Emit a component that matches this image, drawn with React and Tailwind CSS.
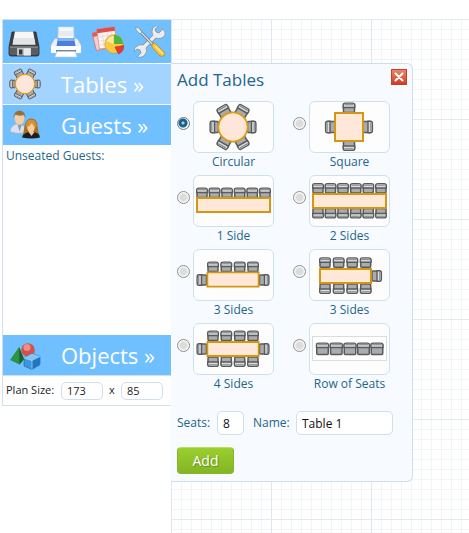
import React from "react";

const TOP = 0;
const RIGHT = 90;
const BOTTOM = 180;
const LEFT = 270;

function Chair({ x, y, turn = 0, w = 12, h = 10 }) {
  return (
    <g transform={`translate(${x} ${y}) rotate(${turn})`}>
      <rect x={-w / 2 + 1} y={-h / 2 + 2} width={w - 2} height={h - 2} rx="1" fill="#a9abae" stroke="#585b5e" strokeWidth="1.5" />
      <path
        d={`M${-w / 2 + 0.7} ${-h / 2 + 5} V${-h / 2 + 2.5} Q${-w / 2 + 0.7} ${-h / 2 + 0.6} ${-w / 2 + 3} ${-h / 2 + 0.6} H${w / 2 - 3} Q${w / 2 - 0.7} ${-h / 2 + 0.6} ${w / 2 - 0.7} ${-h / 2 + 2.5} V${-h / 2 + 5} Z`}
        fill="#dcdddf"
        stroke="#585b5e"
        strokeWidth="1.4"
      />
      <path d={`M${-w / 2 + 2} ${-h / 2 + 2.2} H${w / 2 - 2}`} stroke="#8b8e91" strokeWidth="1.2" />
    </g>
  );
}

function Top({ x, y, w, h }) {
  return (
    <g>
      <rect x={x + 1} y={y + 1} width={w - 2} height={h - 2} fill="#ffe8da" stroke="#d4951c" strokeWidth="2" />
      <rect x={x + 2.4} y={y + 2.4} width={w - 4.8} height={h - 4.8} fill="none" stroke="#fff0b8" strokeWidth="0.8" />
    </g>
  );
}

function RoundTable() {
  return (
    <g>
      <Chair x={30.8} y={10} turn={-30} w={13} h={11} />
      <Chair x={49.2} y={10} turn={30} w={13} h={11} />
      <Chair x={59} y={26} turn={RIGHT} w={13} h={9} />
      <Chair x={49.2} y={42} turn={150} w={13} h={11} />
      <Chair x={30.8} y={42} turn={210} w={13} h={11} />
      <Chair x={21} y={26} turn={LEFT} w={13} h={9} />
      <circle cx="40" cy="26" r="14.5" fill="#ffe6da" stroke="#d99a20" strokeWidth="1.8" />
      <circle cx="40" cy="26" r="13.2" fill="none" stroke="#ffe9b0" strokeWidth="0.8" />
    </g>
  );
}

const SIX = [9, 21.5, 34, 46.7, 59.3, 72];
const FOUR = [20, 33.3, 46.7, 60];
const FOUR_LEFT = [16, 29.7, 43.3, 56.7];

const row = (xs, y, turn) => xs.map((x) => <Chair key={`${x}-${y}`} x={x} y={y} turn={turn} />);

const TABLES = [
  { id: "circular", label: "Circular", art: <RoundTable /> },
  {
    id: "square",
    label: "Square",
    art: (
      <g>
        <Chair x={40} y={6.5} w={13} turn={TOP} />
        <Chair x={40} y={45} w={13} turn={BOTTOM} />
        <Chair x={21} y={26} w={13} turn={LEFT} />
        <Chair x={59} y={26} w={13} turn={RIGHT} />
        <Top x={25} y={11} w={30} h={30} />
      </g>
    ),
  },
  {
    id: "one",
    label: "1 Side",
    art: (
      <g>
        {row(SIX, 17.5, TOP)}
        <Top x={3} y={22} w={75} h={16} />
      </g>
    ),
  },
  {
    id: "two",
    label: "2 Sides",
    art: (
      <g>
        {row(SIX, 13, TOP)}
        {row(SIX, 38.5, BOTTOM)}
        <Top x={3} y={18} w={75} h={16} />
      </g>
    ),
  },
  {
    id: "three-ends",
    label: "3 Sides",
    art: (
      <g>
        {row(FOUR, 17.5, TOP)}
        <Chair x={8.5} y={31} turn={LEFT} />
        <Chair x={71.5} y={31} turn={RIGHT} />
        <Top x={13.5} y={22.5} w={53} h={16} />
      </g>
    ),
  },
  {
    id: "three-long",
    label: "3 Sides",
    art: (
      <g>
        {row(FOUR_LEFT, 13.3, TOP)}
        {row(FOUR_LEFT, 40, BOTTOM)}
        <Chair x={68} y={27} turn={RIGHT} />
        <Top x={10} y={19} w={53} h={16} />
      </g>
    ),
  },
  {
    id: "four",
    label: "4 Sides",
    art: (
      <g>
        {row(FOUR, 12.5, TOP)}
        {row(FOUR, 39, BOTTOM)}
        <Chair x={8.5} y={26} turn={LEFT} />
        <Chair x={71.5} y={26} turn={RIGHT} />
        <Top x={13.5} y={18} w={53} h={16} />
      </g>
    ),
  },
  {
    id: "row",
    label: "Row of Seats",
    art: (
      <g>
        <rect x="3.5" y="13.5" width="74" height="24" fill="#fff" stroke="#bbb" strokeDasharray="1 1" />
        {[13.5, 27.3, 41, 54.5, 68].map((x) => (
          <Chair key={x} x={x} y={25.5} w={13.5} h={12} />
        ))}
      </g>
    ),
  },
];

function SaveIcon() {
  return (
    <svg viewBox="0 0 32 32" className="size-8">
      <path d="M4 6h24l3 15v7q0 2-2 2H3q-2 0-2-2v-7z" fill="#3c4046" stroke="#2b2e33" strokeWidth=".8" />
      <path d="M1.500 21h29v6q0 2-2 2h-25q-2 0-2-2z" fill="#5a5e63" />
      <path d="M7 5.500h18l2.500 13h-23z" fill="#f8f8f8" />
      <path d="M6 12h20l1.300 6.500H4.700z" fill="#e2e4e6" />
      <path d="M2 21h28" stroke="#a9adb1" strokeWidth=".9" />
      <path d="M9 22h14v7.500H9z" fill="#c2c5c8" />
      <path d="M11 23.500h3.500v5H11z" fill="#34373c" />
      <path d="M16 22.500h6.500v7H16z" fill="#e9eaeb" />
    </svg>
  );
}

function PrintIcon() {
  return (
    <svg viewBox="0 0 32 32" className="size-8">
      <path d="M8.500 1h15l.5 13H8z" fill="#f5f6f8" stroke="#d5dadf" strokeWidth=".6" />
      <path d="M9 5h14v5H9z" fill="#e7eaee" />
      <path d="M4 14q0-1.500 2-1.500h2V16h16v-3.500h2q2 0 2 1.500l3 5v7q0 1-1 1H2q-1 0-1-1v-7z" fill="#edf1f6" stroke="#b6c5d4" strokeWidth=".6" />
      <path d="M8 12h16l1.500 8h-19z" fill="#4b7fda" />
      <path d="M8.500 12h15l.5 3H8z" fill="#86b3f3" />
      <path d="M1 20h30v6q0 1-1 1H2q-1 0-1-1z" fill="#fbfcfe" />
      <path d="M6 24h20v2H6z" fill="#71889f" />
      <path d="M7 25.500h18l2 5.500H5z" fill="#fff" stroke="#c3ccd5" strokeWidth=".6" />
    </svg>
  );
}

function ReportIcon() {
  return (
    <svg viewBox="0 0 32 32" className="size-8">
      <g transform="rotate(-14 10 14)">
        <rect x="2" y="5" width="16" height="18" fill="#f3cfcc" stroke="#d86c68" strokeWidth=".7" />
        <path d="M2 5h16v4H2z" fill="#e25c58" />
      </g>
      <g transform="rotate(-8 14 12)">
        <rect x="6" y="2" width="18" height="20" fill="#fbf4f4" stroke="#d98481" strokeWidth=".7" />
        <path d="M6 2h18v4H6z" fill="#df4e4b" />
        <path d="M7 10h16M7 14h16M7 18h16M11 7v14M16 7v14M20 7v14" stroke="#eccbc9" strokeWidth=".6" />
      </g>
      <circle cx="22" cy="18" r="9.200" fill="#f6cb3c" stroke="#c99b26" strokeWidth=".6" />
      <path d="M22 18V8.800A9.200 9.200 0 0 1 31.200 18z" fill="#4fb53c" />
      <path d="M14.500 15q3-5 7-5v8z" fill="#fdeaa3" />
      <path d="M23 21l9-1.500q0 6-5.500 8.500z" fill="#e83b2d" stroke="#b72b21" strokeWidth=".6" />
    </svg>
  );
}

function ToolsIcon() {
  return (
    <svg viewBox="0 0 32 32" className="size-8">
      <path d="M8 23 23 8" stroke="#87929c" strokeWidth="5" />
      <path d="M29 3l-4 4-3-1-1-3 4-3q-7-1-7 6 0 4 4 6 6 2 9-3 1-3-2-6z" fill="#e9edf0" stroke="#87929c" strokeWidth=".8" />
      <path d="M3 20q5-3 9 1 2 5-2 9-3 2-7 1l4-4-1-3-3-1-3 3q0-4 3-6z" fill="#e9edf0" stroke="#87929c" strokeWidth=".8" />
      <path d="M8 23 23 8" stroke="#e9edf0" strokeWidth="3.400" />
      <path d="M5 4l15 16" stroke="#65727e" strokeWidth="2.600" />
      <path d="M5 4l15 16" stroke="#dce4e9" strokeWidth="1.200" />
      <path d="M2 1l3 1 3 4-2 2-4-4z" fill="#e2e7eb" stroke="#7c8791" strokeWidth=".6" />
      <path d="M18 18l3-1 9 9q2 4-1 4-2 1-4-1l-7-8z" fill="#f7c53b" stroke="#bd8920" strokeWidth=".8" />
      <path d="M21 20l8 8" stroke="#ffe79b" strokeWidth="1.500" />
    </svg>
  );
}

function TableIcon() {
  return (
    <svg viewBox="16 2 48 48" className="size-8">
      <RoundTable />
    </svg>
  );
}

function GuestsIcon() {
  return (
    <svg viewBox="0 0 32 32" className="size-8">
      <path d="M1 23q0-7 8-8.500 8 1 9 9-9 2-17-.5z" fill="#dbe0ee" stroke="#9aa5bb" strokeWidth=".6" />
      <path d="M8.500 15l2 7.500 2.500-7.500z" fill="#8499c5" />
      <ellipse cx="10.500" cy="9.500" rx="4.800" ry="6.300" fill="#f4cfa5" />
      <path d="M4.500 9q0-7 6-7.500 6 .500 6 7.500l-1.500-3q-5 1.500-9-.5z" fill="#94703a" />
      <path d="M14 27q1-8 2-12 2-6 7-5.500 5 .500 5.500 7 .500 6 2 9.500l-7 3z" fill="#a96f22" />
      <path d="M13 28.500q1-5.500 9.500-5.500 8 0 8.500 5.500-8 2-18 0z" fill="#1d1e23" />
      <path d="M19.500 23l3 4 3-4z" fill="#f1c496" />
      <ellipse cx="22" cy="18" rx="3.800" ry="5.500" fill="#f5cda1" />
      <path d="M17 18.500q-1-8 5.500-8 5.500.500 5 8-3.500-1-4.500-4.500-2 3-6 4.500z" fill="#cf923a" />
    </svg>
  );
}

function ObjectsIcon() {
  return (
    <svg viewBox="0 0 32 32" className="size-8">
      <circle cx="19" cy="11" r="6.800" fill="#d5504c" />
      <circle cx="18" cy="8.500" r="3.500" fill="#f3a39e" opacity=".75" />
      <path d="M10 8 1 21l9.500 4.500L15 20z" fill="#2b9445" />
      <path d="M10 8l.5 17.500L15 20z" fill="#17632b" />
      <path d="M15 19l8-4.500 8 3v8l-8 5-8-3.500z" fill="#3b96e0" stroke="#1b5f9f" strokeWidth=".6" />
      <path d="M15 19l8-4.500 8 3-8 4z" fill="#84c5f2" />
      <path d="M23 21.500l8-4v8l-8 5z" fill="#2475c0" />
      <path d="M15 19l8 2.500v9M23 21.500l8-4" fill="none" stroke="#a6daf8" strokeWidth=".7" />
    </svg>
  );
}

function NavButton({ icon, active, children }) {
  return (
    <button
      type="button"
      className={`flex h-10 w-full items-center pl-[6px] text-left text-[22px] leading-none text-white ${active ? "bg-[#a3d4ff]" : "bg-[#70bfff]"}`}
    >
      <span className="flex w-[52px] shrink-0">{icon}</span>
      {children}
    </button>
  );
}

function Sidebar() {
  const tools = [
    ["Save", <SaveIcon />],
    ["Print", <PrintIcon />],
    ["Reports", <ReportIcon />],
    ["Settings", <ToolsIcon />],
  ];
  return (
    <aside className="ml-[2px] flex w-[169px] shrink-0 flex-col self-start border border-r-0 border-[#d3e0ea]">
      <div className="flex h-[43px] items-center justify-between bg-[#70bfff] px-[5px]">
        {tools.map(([name, icon]) => (
          <button key={name} type="button" aria-label={name}>
            {icon}
          </button>
        ))}
      </div>
      <nav className="mt-px flex flex-col gap-px">
        <NavButton icon={<TableIcon />} active>Tables »</NavButton>
        <NavButton icon={<GuestsIcon />}>Guests »</NavButton>
        <section className="h-[188px] px-[3px] py-[2px] text-xs text-[#24658a]">Unseated Guests:</section>
        <NavButton icon={<ObjectsIcon />}>Objects »</NavButton>
      </nav>
      <div className="flex h-[30px] items-center border-t border-[#d3e0ea] px-[3px] text-[11px] text-[#222]">
        <label htmlFor="plan-width" className="w-[55px]">Plan Size:</label>
        <input id="plan-width" defaultValue="173" className="h-[18px] w-[42px] rounded-[5px] border border-[#d0dfe9] bg-white px-[5px] outline-none" />
        <label htmlFor="plan-height" className="w-[18px] text-center">x</label>
        <input id="plan-height" defaultValue="85" className="h-[18px] w-[42px] rounded-[5px] border border-[#d0dfe9] bg-white px-[5px] outline-none" />
      </div>
    </aside>
  );
}

function TableOption({ table, checked }) {
  return (
    <label className="grid h-[74px] grid-cols-[16px_81px] content-start">
      <input
        type="radio"
        name="table-type"
        defaultChecked={checked}
        className="mt-4 size-[13px] appearance-none rounded-full border border-[#8d9092] bg-[radial-gradient(circle,#dcdcdc_0_3px,#f8f8f8_5px)] checked:border-[#6b7b88] checked:bg-[radial-gradient(circle_at_5px_5px,#8fd8f5_0_1px,#1d5f8c_2px_4px,#eef3f6_5px)]"
      />
      <span className="h-[52px] rounded-[6px] border border-[#d0e0ea] bg-[#fdfdfd]">
        <svg viewBox="1 1 79 50" className="h-[50px] w-[79px]">{table.art}</svg>
      </span>
      <span className="col-start-2 text-center text-xs leading-[18px] whitespace-nowrap text-[#24658a]">{table.label}</span>
    </label>
  );
}

function AddTables() {
  return (
    <form className="absolute top-11 left-0 w-[242px] rounded-r-[6px] border border-l-0 border-[#cfdfe9] bg-[#f7fbff] pt-[5px] pr-[5px] pb-[7px] pl-[6px] text-[#24658a]">
      <header className="flex h-8 items-start justify-between">
        <h2 className="text-[17px] leading-[22px]">Add Tables</h2>
        <button type="button" aria-label="Close" className="size-4 border border-[#b9462d] bg-linear-to-b from-[#ec8468] to-[#d23d1c]">
          <svg viewBox="0 0 14 14" className="size-[14px]">
            <path d="M3.500 3.500l7 7M10.500 3.500l-7 7" stroke="#fff" strokeWidth="2" strokeLinecap="round" />
          </svg>
        </button>
      </header>
      <div className="grid grid-cols-[116px_97px]">
        {TABLES.map((table, i) => (
          <TableOption key={table.id} table={table} checked={i === 0} />
        ))}
      </div>
      <div className="mt-[14px] flex items-center text-xs">
        <label htmlFor="seats" className="w-10">Seats:</label>
        <input id="seats" defaultValue="8" className="h-6 w-[27px] rounded-[5px] border border-[#d0dfe9] bg-white px-[5px] text-[#111] outline-none" />
        <label htmlFor="table-name" className="ml-[9px] w-[43px]">Name:</label>
        <input id="table-name" defaultValue="Table 1" className="h-6 w-[97px] rounded-[5px] border border-[#d0dfe9] bg-white px-[5px] text-[#111] outline-none" />
      </div>
      <button type="submit" className="mt-3 h-[27px] w-[57px] rounded-[4px] border border-[#86b52a] border-t-[#b7e05f] bg-linear-to-b from-[#9bcf2e] to-[#83b524] text-sm leading-none text-white [text-shadow:1px_1px_1px_#5f8a1a]">
        Add
      </button>
    </form>
  );
}

export default function App() {
  return (
    <div className="flex min-h-screen bg-white pt-[19px] font-['Open_Sans','Noto_Sans',sans-serif]">
      <Sidebar />
      <main className="relative min-h-[514px] flex-1 bg-[linear-gradient(#e2eaef_1px,transparent_1px),linear-gradient(90deg,#dde7ed_1px,transparent_1px),linear-gradient(#f2f5f6_1px,transparent_1px),linear-gradient(90deg,#f2f5f6_1px,transparent_1px)] bg-[size:100px_100px,100px_100px,10px_10px,10px_10px]">
        <AddTables />
      </main>
    </div>
  );
}
